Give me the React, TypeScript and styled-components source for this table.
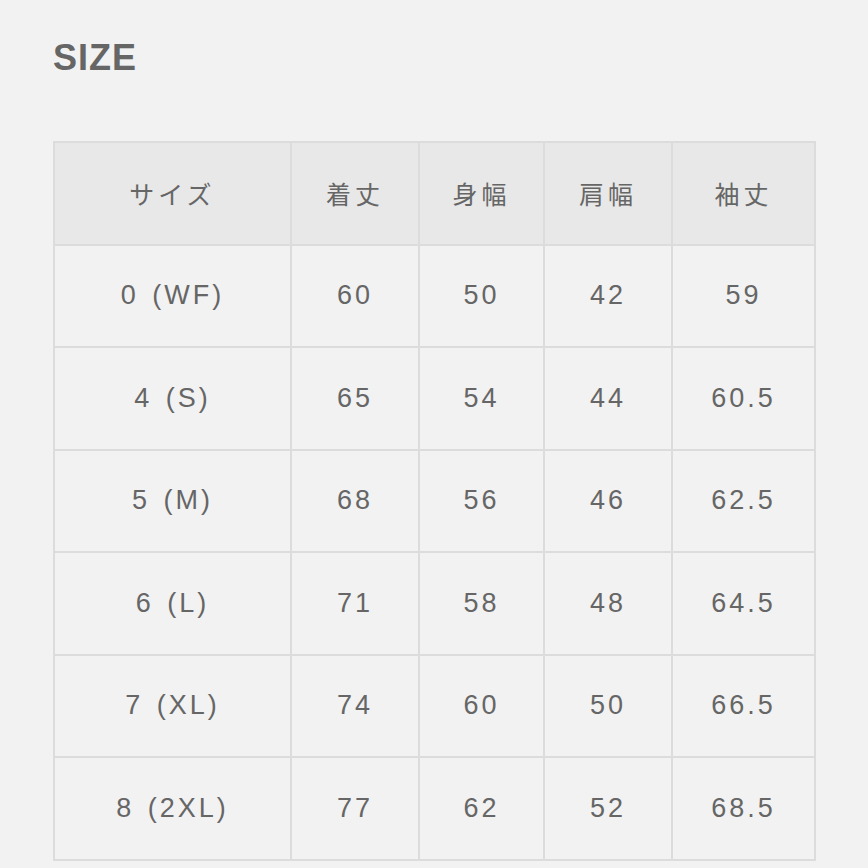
import styled, { createGlobalStyle } from 'styled-components';

const GlobalStyle = createGlobalStyle`
    html, body {
        margin: 0;
        padding: 0;
        background: #f2f2f2;
    }
`;

const Page = styled.div`
    width: 868px;
    height: 868px;
    overflow: hidden;
    padding: 38px 0 0 53px;
    box-sizing: border-box;
    background: #f2f2f2;
    font-family: 'Liberation Sans', 'Noto Sans CJK JP', sans-serif;
    color: #666;
`;

const Title = styled.h2`
    margin: 0;
    font-family: 'Liberation Sans', Arial, sans-serif;
    font-size: 36px;
    font-weight: 700;
    line-height: 40px;
    letter-spacing: 1px;
    color: #666;
`;

const Table = styled.table`
    margin-top: 63px;
    width: 761px;
    border-collapse: collapse;
    table-layout: fixed;
    border: 2px solid #dcdcdc;
`;

const Cell = styled.td<{ $head?: boolean }>`
    height: 100.5px;
    padding: 0;
    border: 2px solid #dcdcdc;
    background: ${p => (p.$head ? '#e8e8e8' : '#f2f2f2')};
    text-align: center;
    vertical-align: middle;
    font-family: ${p =>
        p.$head
            ? "'Noto Sans CJK JP', sans-serif"
            : "'Liberation Sans', 'Noto Sans CJK JP', sans-serif"};
    font-size: ${p => (p.$head ? '25px' : '27px')};
    font-weight: 400;
    letter-spacing: ${p => (p.$head ? '4px' : '3px')};
    word-spacing: ${p => (p.$head ? '0' : '3px')};
    color: #666;
`;

const columns = [237, 128, 125, 128, 143];
const headers = ['サイズ', '着丈', '身幅', '肩幅', '袖丈'];

const rows = [
    ['0 (WF)', '60', '50', '42', '59'],
    ['4 (S)', '65', '54', '44', '60.5'],
    ['5 (M)', '68', '56', '46', '62.5'],
    ['6 (L)', '71', '58', '48', '64.5'],
    ['7 (XL)', '74', '60', '50', '66.5'],
    ['8 (2XL)', '77', '62', '52', '68.5'],
];

export default function App() {
    return (
        <>
            <GlobalStyle />
            <Page>
                <Title>SIZE</Title>

                <Table>
                    <colgroup>
                        {columns.map((w, i) => (
                            <col key={i} style={{ width: w }} />
                        ))}
                    </colgroup>
                    <thead>
                        <tr>
                            {headers.map(h => (
                                <Cell as="th" $head key={h}>{h}</Cell>
                            ))}
                        </tr>
                    </thead>
                    <tbody>
                        {rows.map(row => (
                            <tr key={row[0]}>
                                {row.map((v, i) => (
                                    <Cell key={i}>{v}</Cell>
                                ))}
                            </tr>
                        ))}
                    </tbody>
                </Table>
            </Page>
        </>
    );
}
